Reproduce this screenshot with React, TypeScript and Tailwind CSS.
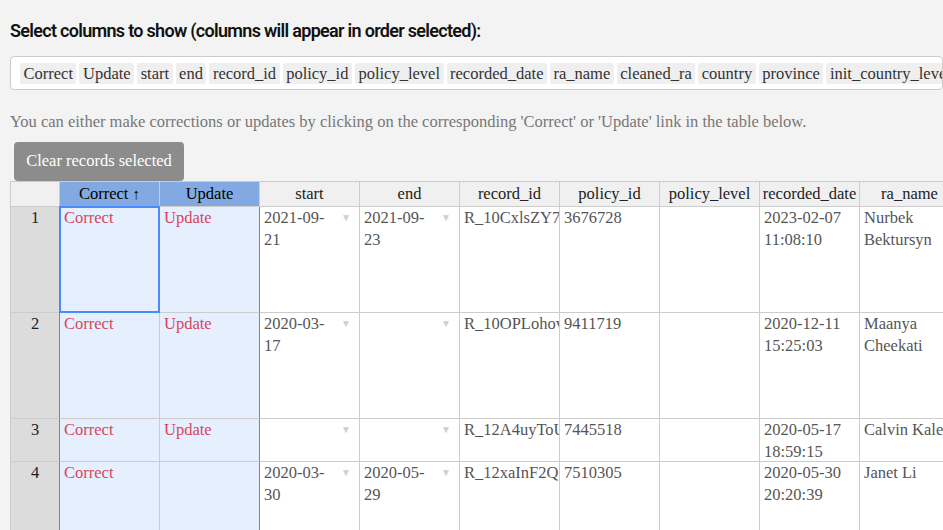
import React from "react";

const serif = { fontFamily: '"Liberation Serif", "DejaVu Serif", serif' };

const tags = [
  "Correct",
  "Update",
  "start",
  "end",
  "record_id",
  "policy_id",
  "policy_level",
  "recorded_date",
  "ra_name",
  "cleaned_ra",
  "country",
  "province",
  "init_country_level",
];

const cols = [
  "start",
  "end",
  "record_id",
  "policy_id",
  "policy_level",
  "recorded_date",
  "ra_name",
  "cleaned_ra",
];

type Row = {
  n: number;
  h: number;
  update: boolean;
  start: string[];
  end: string[];
  rid: string;
  pid: string;
  date: string[];
  name: string[];
};

const rows: Row[] = [
  { n: 1, h: 106, update: true, start: ["2021-09-", "21"], end: ["2021-09-", "23"], rid: "R_10CxlsZY7rWq", pid: "3676728", date: ["2023-02-07", "11:08:10"], name: ["Nurbek", "Bektursyn"] },
  { n: 2, h: 106, update: true, start: ["2020-03-", "17"], end: [], rid: "R_10OPLohovXxz", pid: "9411719", date: ["2020-12-11", "15:25:03"], name: ["Maanya", "Cheekati"] },
  { n: 3, h: 43, update: true, start: [], end: [], rid: "R_12A4uyToUbNm", pid: "7445518", date: ["2020-05-17", "18:59:15"], name: ["Calvin Kaleel"] },
  { n: 4, h: 80, update: false, start: ["2020-03-", "30"], end: ["2020-05-", "29"], rid: "R_12xaInF2QlKp", pid: "7510305", date: ["2020-05-30", "20:20:39"], name: ["Janet Li"] },
];

function Lines({ l }: { l: string[] }) {
  return (
    <>
      {l.map((s, i) => (
        <div key={i} className="whitespace-nowrap">{s}</div>
      ))}
    </>
  );
}

function Arrow() {
  return (
    <span className="absolute right-[8px] top-[0px] text-[10px] leading-[22px] text-[#d0d0d0]">▼</span>
  );
}

function Clip({ children }: { children: React.ReactNode }) {
  return <div className="w-[95px] max-h-[42px] overflow-hidden whitespace-nowrap">{children}</div>;
}

export default function App() {
  const td = "border-r border-b border-[#cccccc] align-top px-[4px] relative";
  return (
    <div className="w-[943px] h-[530px] overflow-hidden bg-[#f3f3f3]">
      <div className="pl-[10px] pt-[19px]">
        <h3
          className="text-[18px] leading-[24px] font-semibold text-[#111] tracking-[-0.7px]"
          style={{ fontFamily: 'Roboto, "Noto Sans", sans-serif' }}
        >
          Select columns to show (columns will appear in order selected):
        </h3>
        <div className="mt-[13px] h-[34px] border border-[#cccccc] rounded-[4px] bg-white flex items-center gap-[3px] pl-[9px] overflow-hidden whitespace-nowrap">
          {tags.map((t) => (
            <span
              key={t}
              className="bg-[#efefef] rounded-[2px] px-[3.5px] h-[21px] leading-[21px] text-[16.5px] text-[#333] shrink-0"
              style={serif}
            >
              {t}
            </span>
          ))}
        </div>
        <p className="mt-[21px] text-[16.5px] leading-[22px] text-[#777]" style={serif}>
          You can either make corrections or updates by clicking on the corresponding 'Correct' or 'Update' link in the table below.
        </p>
        <button
          className="mt-[9px] ml-[4px] w-[170px] h-[39px] bg-[#8c8c8c] text-white rounded-[4px] text-[16.5px] block"
          style={serif}
        >
          Clear records selected
        </button>
        <div className="overflow-hidden">
          <table
            className="table-fixed border-separate border-spacing-0 text-[16.5px] leading-[22px]"
            style={{ ...serif, width: 50 + 100 * 10 }}
          >
            <colgroup>
              <col style={{ width: 50 }} />
              {Array.from({ length: 10 }).map((_, i) => (
                <col key={i} style={{ width: 100 }} />
              ))}
            </colgroup>
            <thead>
              <tr className="h-[26px]">
                <th className="border border-[#cccccc] border-l border-t bg-[#f0f0f0]"></th>
                <th className="border-t border-r border-b border-[#cccccc] bg-[#82a9e1] font-normal text-black">
                  Correct <span className="text-[15px]">↑</span>
                </th>
                <th className="border-t border-r border-b border-[#cccccc] bg-[#82a9e1] font-normal text-black">
                  Update
                </th>
                {cols.map((c) => (
                  <th key={c} className="border-t border-r border-b border-[#cccccc] bg-[#f0f0f0] font-normal text-[#222] whitespace-nowrap overflow-hidden">
                    {c}
                  </th>
                ))}
              </tr>
            </thead>
            <tbody>
              {rows.map((r) => (
                <tr key={r.n} style={{ height: r.h }}>
                  <td className="border-l border-b border-r border-l-[#cccccc] border-b-[#cccccc] border-r-[#4b89ff] bg-[#dcdcdc] text-center align-top text-[#222]">
                    {r.n}
                  </td>
                  <td className={`${td} bg-[#e6effe] text-[#d5475d]`}>
                    {r.n === 1 && (
                      <div className="absolute left-[-1px] top-[-1px] right-[-1px] bottom-[-1px] border-2 border-[#4b89ff]"></div>
                    )}
                    Correct
                  </td>
                  <td className="border-r border-b border-r-[#4b89ff] border-b-[#cccccc] align-top px-[4px] bg-[#e6effe] text-[#d5475d]">
                    {r.update ? "Update" : ""}
                  </td>
                  <td className={`${td} bg-white text-[#555]`}>
                    <Lines l={r.start} />
                    <Arrow />
                  </td>
                  <td className={`${td} bg-white text-[#555]`}>
                    <Lines l={r.end} />
                    <Arrow />
                  </td>
                  <td className={`${td} bg-white text-[#555]`}>
                    <Clip>{r.rid}</Clip>
                  </td>
                  <td className={`${td} bg-white text-[#555]`}>{r.pid}</td>
                  <td className={`${td} bg-white`}></td>
                  <td className={`${td} bg-white text-[#555]`}>
                    <Clip>
                      <Lines l={r.date} />
                    </Clip>
                  </td>
                  <td className={`${td} bg-white text-[#555]`}>
                    <Clip>
                      <Lines l={r.name} />
                    </Clip>
                  </td>
                  <td className={`${td} bg-white`}></td>
                </tr>
              ))}
            </tbody>
          </table>
        </div>
      </div>
    </div>
  );
}
